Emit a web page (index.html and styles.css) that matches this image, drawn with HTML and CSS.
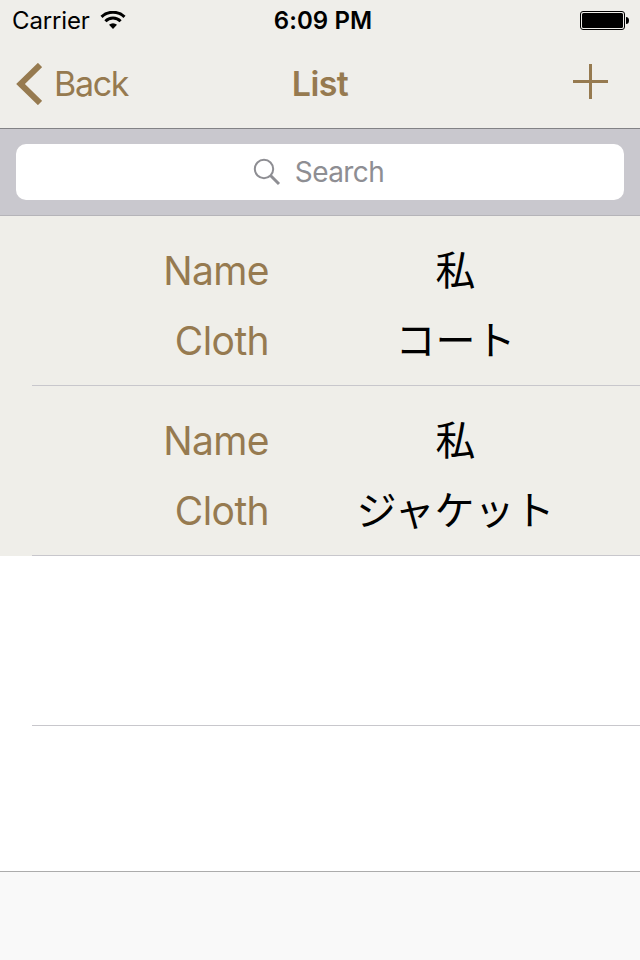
FILE: index.html
```
<!DOCTYPE html>
<html lang="ja">
<head>
    <meta charset="UTF-8">
    <meta name="viewport" content="width=device-width, initial-scale=1.0">
    <title>List</title>
    <link rel="stylesheet" href="styles.css">
</head>
<body>
    <header class="header">
        <div class="status-bar">
            <div class="carrier">
                <span class="carrier-name">Carrier</span>
                <svg class="wifi" width="26" height="18" viewBox="0 0 26 18">
                    <path d="M1.5 5.8 A16.8 16.8 0 0 1 24.5 5.8" fill="none" stroke="#000" stroke-width="3"/>
                    <path d="M5.4 10.2 A10.8 10.8 0 0 1 20.6 10.2" fill="none" stroke="#000" stroke-width="3"/>
                    <path d="M13 18 L9 13.8 A6 6 0 0 1 17 13.8 Z"/>
                </svg>
            </div>
            <div class="clock">6:09 PM</div>
            <svg class="battery" width="49" height="19" viewBox="0 0 49 19">
                <rect x="0.5" y="0.5" width="44" height="18" rx="2.5" fill="none" stroke="#000"/>
                <rect x="2" y="2" width="41" height="15" rx="1.5"/>
                <path d="M46 6 Q49 6 49 9.5 Q49 13 46 13 Z"/>
            </svg>
        </div>
        <nav class="nav-bar">
            <a class="back-button" href="#">
                <svg class="chevron" width="26" height="42" viewBox="0 0 26 42">
                    <path d="M24 2 L4.5 21 L24 40" fill="none" stroke="#967a50" stroke-width="6"/>
                </svg>
                <span class="back-label">Back</span>
            </a>
            <h1 class="nav-title">List</h1>
            <a class="add-button" href="#">
                <svg width="35" height="35" viewBox="0 0 35 35">
                    <path d="M17.5 0 V35 M0 17.5 H35" stroke="#967a50" stroke-width="3"/>
                </svg>
            </a>
        </nav>
    </header>

    <div class="search-bar">
        <div class="search-field">
            <svg class="search-icon" width="28" height="28" viewBox="0 0 28 28">
                <circle cx="11" cy="11" r="9.2" fill="none" stroke="#8e8e93" stroke-width="2"/>
                <path d="M17.5 17.5 L26 26" stroke="#8e8e93" stroke-width="3"/>
            </svg>
            <span class="search-label">Search</span>
        </div>
    </div>

    <main class="list">
        <div class="cell">
            <div class="label">Name</div>
            <div class="value">私</div>
            <div class="label">Cloth</div>
            <div class="value">コート</div>
        </div>
        <div class="cell">
            <div class="label">Name</div>
            <div class="value">私</div>
            <div class="label">Cloth</div>
            <div class="value">ジャケット</div>
        </div>
        <div class="cell empty"></div>
    </main>

    <footer class="toolbar"></footer>
</body>
</html>
```

FILE: styles.css
```
* {
    margin: 0;
    padding: 0;
    box-sizing: border-box;
}

body {
    font-family: Inter, "Noto Sans CJK JP", sans-serif;
    background: #fff;
    color: #000;
    height: 960px;
    display: flex;
    flex-direction: column;
    overflow: hidden;
}

.header {
    height: 129px;
    background: #efeeea;
    border-bottom: 1px solid #828286;
}

.status-bar {
    display: grid;
    grid-template-columns: 1fr auto 1fr;
    align-items: center;
    height: 40px;
    padding: 0 11px 0 12px;
}

.carrier {
    display: flex;
    align-items: center;
    gap: 10px;
    font-size: 24px;
    letter-spacing: -0.15px;
}

.clock {
    padding-left: 5px;
    font-size: 24px;
    font-weight: 600;
    letter-spacing: 0.1px;
}

.battery {
    justify-self: end;
}

.nav-bar {
    display: grid;
    grid-template-columns: 1fr auto 1fr;
    align-items: center;
    height: 88px;
    padding: 0 16px;
    color: #967a50;
}

.nav-bar a {
    color: inherit;
    text-decoration: none;
}

.back-button {
    display: flex;
    align-items: center;
    gap: 12px;
    font-size: 34px;
    letter-spacing: -1.3px;
}

.nav-title {
    font-size: 34px;
    font-weight: 600;
    letter-spacing: -0.6px;
}

.back-label,
.nav-title {
    padding-bottom: 1px;
}

.add-button {
    display: flex;
    justify-self: end;
    margin-right: 16px;
    padding-bottom: 5px;
}

.search-bar {
    height: 87px;
    padding: 15px 16px;
    background: #c9c8ce;
    border-bottom: 1px solid #b5b4b9;
}

.search-field {
    display: flex;
    align-items: center;
    justify-content: center;
    gap: 14px;
    height: 56px;
    padding-right: 3px;
    border-radius: 10px;
    background: #fff;
    color: #8e8e93;
    font-size: 28px;
    letter-spacing: -0.6px;
}

.list {
    flex: 1;
}

.cell {
    display: grid;
    grid-template-columns: 269px 1fr;
    grid-template-rows: 70px 70px;
    align-items: center;
    height: 170px;
    padding-top: 19px;
    background: linear-gradient(#c8c7cc, #c8c7cc) 32px 100% / 100% 1px no-repeat #efeee9;
}

.cell.empty {
    background-color: #fff;
}

.label {
    color: #967a50;
    font-size: 39px;
    letter-spacing: -0.6px;
    text-align: right;
}

.value {
    width: 373px;
    padding-bottom: 5px;
    font-family: "Noto Sans CJK JP", sans-serif;
    font-size: 40px;
    line-height: 58px;
    text-align: center;
}

.toolbar {
    height: 89px;
    background: #f9f9f9;
    border-top: 1px solid #acacac;
}
```
